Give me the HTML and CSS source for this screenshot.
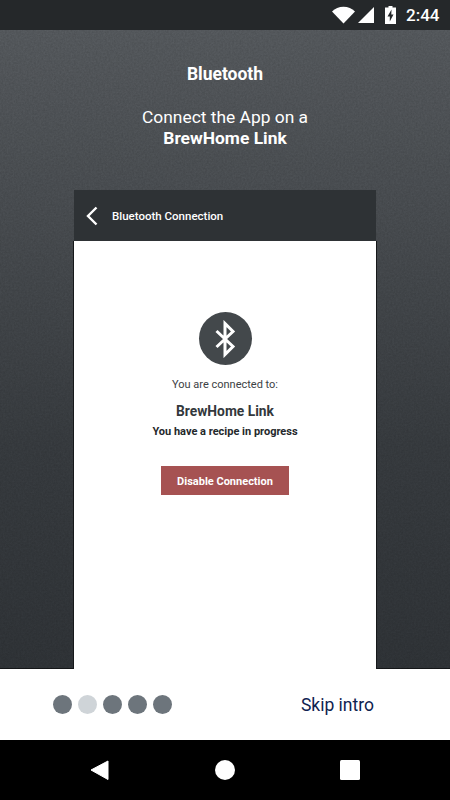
FILE: index.html
```html
<!DOCTYPE html>
<html lang="en">
<head>
    <meta charset="UTF-8">
    <title>BrewHome intro</title>
    <link rel="stylesheet" href="styles.css">
</head>
<body>
    <div class="screen">
        <div class="statusbar">
            <svg class="ic-wifi" width="23" height="18" viewBox="0 0 23 18"><path d="M0 5.500C3 2.500 7 .8 11.500 .8S20 2.500 23 5.500L11.500 17.500Z" fill="#fff"/></svg>
            <svg class="ic-signal" width="16" height="16" viewBox="0 0 16 16"><path d="M16 0V16H0Z" fill="#fff"/></svg>
            <svg class="ic-battery" width="11" height="18" viewBox="0 0 11 18"><path fill-rule="evenodd" d="M3.500 0H7.500V1.500H11V18H0V1.500H3.500ZM6.500 3.500L2.500 10.500H4.800V15.500L8.500 8.500H6.300Z" fill="#fff"/></svg>
            <span class="time">2:44</span>
        </div>

        <div class="hero">
            <svg class="grain" width="450" height="640"><filter id="noise"><feTurbulence type="fractalNoise" baseFrequency="0.55" numOctaves="3" seed="4"/><feColorMatrix values="0 0 0 0 0  0 0 0 0 0  0 0 0 0 0  0.9 0 0 0 -0.2"/></filter><rect width="450" height="640" filter="url(#noise)"/></svg>
            <h1>Bluetooth</h1>
            <p class="lead">Connect the App on a<br><b>BrewHome Link</b></p>

            <div class="phone">
                <div class="phone-head">
                    <svg width="14" height="20" viewBox="0 0 14 20"><path d="M11.500 1.500L3 10L11.500 18.500" fill="none" stroke="#fff" stroke-width="2.400"/></svg>
                    <span>Bluetooth Connection</span>
                </div>
                <div class="phone-body">
                    <div class="bt-circle">
                        <svg width="24" height="38" viewBox="0 0 24 38"><path d="M3.500 11L20 26.500L12 34.500V3.500L20 11.500L3.500 27" fill="none" stroke="#fff" stroke-width="3"/></svg>
                    </div>
                    <p class="connected">You are connected to:</p>
                    <p class="device">BrewHome Link</p>
                    <p class="recipe">You have a recipe in progress</p>
                    <div class="disable">Disable Connection</div>
                </div>
            </div>
        </div>

        <div class="footer">
            <div class="dots">
                <i></i><i class="on"></i><i></i><i></i><i></i>
            </div>
            <a class="skip">Skip intro</a>
        </div>

        <div class="navbar">
            <svg width="20" height="20" viewBox="0 0 20 20"><path d="M18 1V19.500L1 10Z" fill="#fff" stroke="#fff" stroke-linejoin="round"/></svg>
            <svg width="20" height="20" viewBox="0 0 20 20"><circle cx="10" cy="10" r="10" fill="#fff"/></svg>
            <svg width="20" height="20" viewBox="0 0 20 20"><rect width="20" height="20" rx="1.500" fill="#fff"/></svg>
        </div>
    </div>
</body>
</html>
```

FILE: styles.css
```css
*{margin:0; padding:0; box-sizing:border-box;}
body{
    font-family: Roboto, "Liberation Sans", sans-serif;
    background: #000;
}
.screen{
    display: flex;
    flex-direction: column;
    width: 450px;
    height: 800px;
    overflow: hidden;
}
.statusbar{
    display: flex;
    align-items: center;
    flex: 0 0 30px;
    padding-left: 332px;
    background: #25282a;
    color: #fff;
}
.ic-wifi{margin-right: 3px;}
.ic-signal{margin-right: 11px;}
.ic-battery{margin-right: 10px;}
.time{
    font-size: 17px;
    font-weight: 500;
}
.hero{
    position: relative;
    flex: 0 0 639px;
    overflow: hidden;
    padding-top: 34px;
    background: linear-gradient(180deg, #585c60 0%, #4a4e52 30%, #393d41 65%, #313539 100%);
    box-shadow: inset 0 -1px 0 #16181a;
    color: #fff;
    text-align: center;
}
.grain{
    position: absolute;
    top: 0;
    left: 0;
    opacity: .2;
}
.hero h1{
    position: relative;
    height: 20px;
    line-height: 20px;
    font-size: 17.500px;
    font-weight: 700;
}
.lead{
    position: relative;
    margin-top: 23px;
    font-size: 17.400px;
    line-height: 21px;
}
.lead b{font-weight: 700;}
.phone{
    position: relative;
    display: flex;
    flex-direction: column;
    width: 302px;
    height: 480px;
    margin: 41px 0 0 74px;
    text-align: center;
}
.phone-head{
    display: flex;
    align-items: center;
    flex: 0 0 51px;
    padding-left: 11px;
    background: #2e3235;
    font-size: 11.500px;
    font-weight: 500;
}
.phone-head span{margin-left: 13px;}
.phone-body{
    display: flex;
    flex-direction: column;
    align-items: center;
    flex: 1;
    padding-top: 71px;
    background: #fff;
    box-shadow: -1px 0 0 #16181a, 1px 0 0 #16181a;
}
.bt-circle{
    display: flex;
    align-items: center;
    justify-content: center;
    width: 53px;
    height: 53px;
    border-radius: 50%;
    background: #43484b;
}
.connected{
    margin-top: 13px;
    font-size: 11px;
    line-height: 14px;
    color: #3c4144;
}
.device{
    margin-top: 11px;
    font-size: 13.800px;
    line-height: 16px;
    font-weight: 700;
    color: #33383c;
}
.recipe{
    margin-top: 6px;
    font-size: 11px;
    line-height: 13px;
    font-weight: 700;
    color: #24282b;
}
.disable{
    width: 128px;
    height: 29px;
    margin-top: 28px;
    background: #a65252;
    color: #fff;
    font-size: 11px;
    font-weight: 700;
    line-height: 31px;
}
.footer{
    display: flex;
    align-items: center;
    justify-content: space-between;
    flex: 0 0 71px;
    padding: 0 76px 0 53px;
    background: #fff;
}
.dots{
    display: flex;
    gap: 6px;
}
.dots i{
    width: 19px;
    height: 19px;
    border-radius: 50%;
    background: #6d757c;
}
.dots i.on{background: #cfd4d8;}
.skip{
    font-size: 17.500px;
    color: #0f2350;
}
.navbar{
    display: flex;
    align-items: center;
    justify-content: space-between;
    flex: 0 0 60px;
    padding: 0 90px;
    background: #000;
}
```
